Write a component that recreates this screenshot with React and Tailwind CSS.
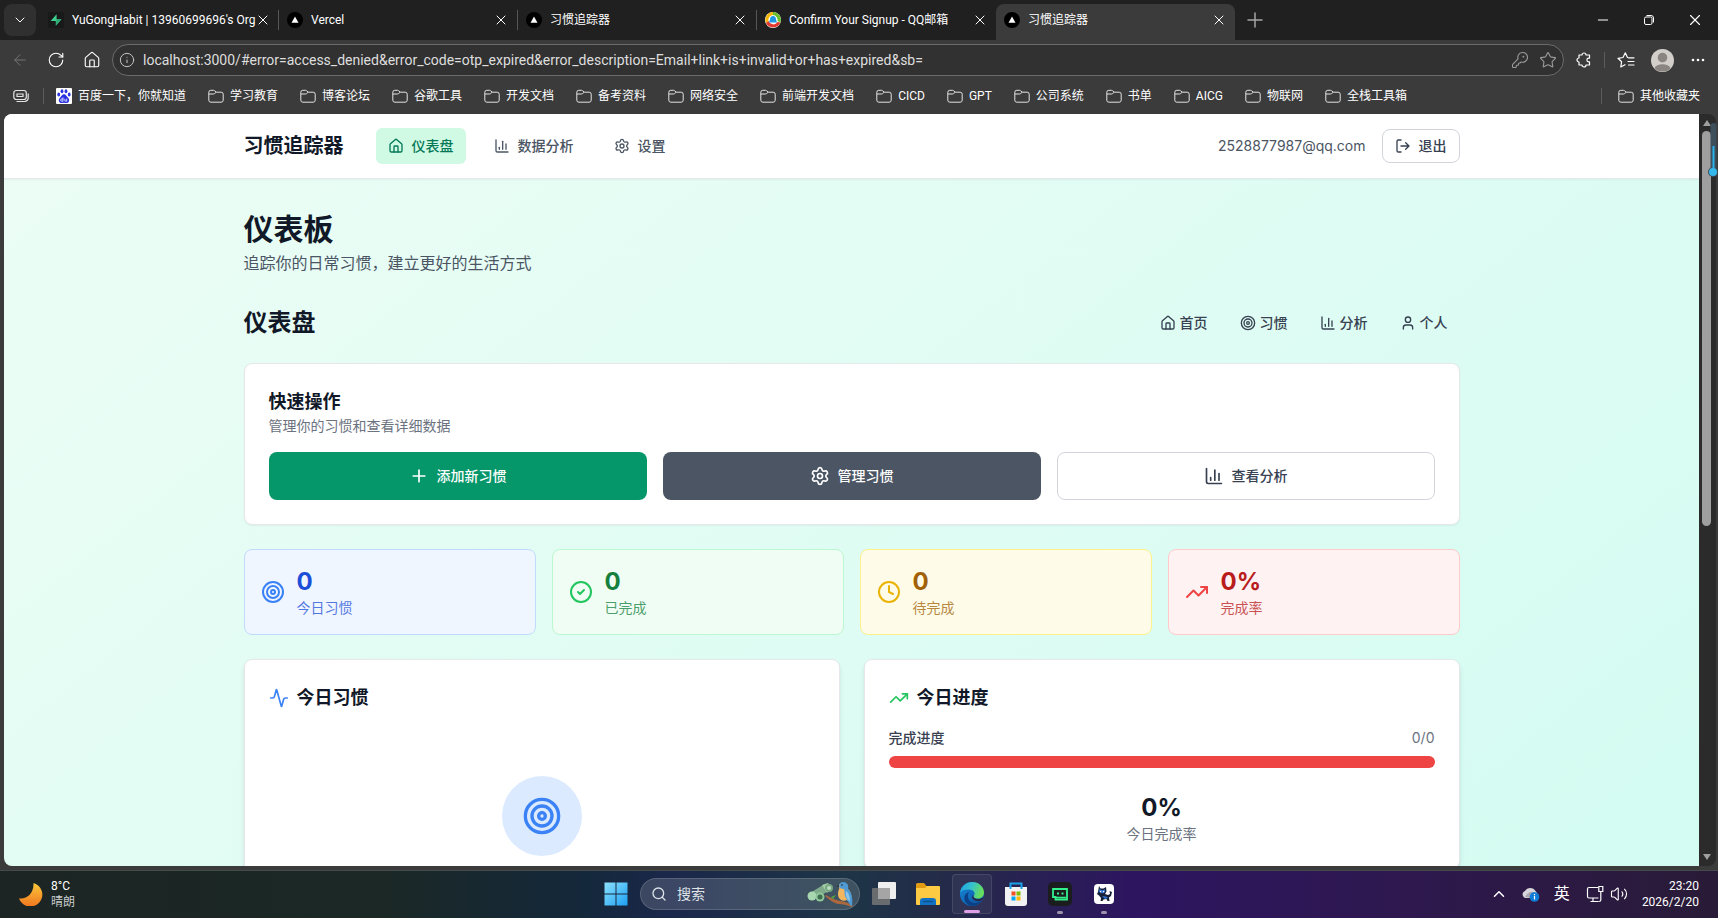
import {
    Activity, ArrowLeft, ChartColumn, ChevronDown, ChevronUp, CircleCheck, Clock, House, Info, KeyRound,
    Minus, Plus, RotateCw, Search, Settings, Star, Target, TrendingUp, User, Volume2, X,
} from 'lucide-react';

const tabs = [
    { id: 1, title: "YuGongHabit | 13960699696's Org", icon: 'supabase' },
    { id: 2, title: 'Vercel', icon: 'vercel' },
    { id: 3, title: '习惯追踪器', icon: 'vercel' },
    { id: 4, title: 'Confirm Your Signup - QQ邮箱', icon: 'qq' },
    { id: 5, title: '习惯追踪器', icon: 'vercel', active: true },
];

const bookmarks = [
    '学习教育', '博客论坛', '谷歌工具', '开发文档', '备考资料', '网络安全', '前端开发文档',
    'CICD', 'GPT', '公司系统', '书单', 'AICG', '物联网', '全栈工具箱',
];

const stats = [
    { label: '今日习惯', value: '0', Icon: Target, card: 'bg-[#eff6ff] border-[#bfdbfe] text-[#1d4ed8]', icon: 'text-[#3b82f6]' },
    { label: '已完成', value: '0', Icon: CircleCheck, card: 'bg-[#f0fdf4] border-[#bbf7d0] text-[#15803d]', icon: 'text-[#22c55e]' },
    { label: '待完成', value: '0', Icon: Clock, card: 'bg-[#fefce8] border-[#fef08a] text-[#a16207]', icon: 'text-[#eab308]' },
    { label: '完成率', value: '0%', Icon: TrendingUp, card: 'bg-[#fef2f2] border-[#fecaca] text-[#b91c1c]', icon: 'text-[#ef4444]' },
];

const quickNav = [
    { label: '首页', Icon: House },
    { label: '习惯', Icon: Target },
    { label: '分析', Icon: ChartColumn },
    { label: '个人', Icon: User },
];

function Favicon({ name }) {
    if (name === 'supabase') {
        return (
            <svg className="size-4 shrink-0" viewBox="0 0 16 16">
                <rect width="16" height="16" rx="2" fill="#191919" />
                <path d="M8.6 2.2v5h4.9L7.8 13.8V9H2.6z" fill="#3ecf8e" />
                <path d="M8.6 7.2h4.9L7.8 13.8z" fill="#2fa673" />
            </svg>
        );
    }
    if (name === 'qq') {
        return (
            <svg className="size-4 shrink-0" viewBox="0 0 16 16">
                <circle cx="8" cy="8" r="8" fill="#fff" />
                <path d="M1 11A8 8 0 0 1 8 0v3a5 5 0 0 0-4.500 6z" fill="#f7b500" />
                <path d="M8 0a8 8 0 0 1 7.500 10.500L12.500 9A5 5 0 0 0 8 3z" fill="#6abf2a" />
                <path d="M15.500 10.500A8 8 0 0 1 1 11l2.500-2A5 5 0 0 0 12.500 10z" fill="#e23a2e" />
                <path d="M8 4c2 0 3 1.500 3 3.500l1 3H4l1-3C5 5.500 6 4 8 4z" fill="#2196e3" />
            </svg>
        );
    }
    return (
        <svg className="size-4 shrink-0" viewBox="0 0 16 16">
            <circle cx="8" cy="8" r="8" fill="#000" />
            <path d="M8 4.500l3.500 6.200h-7z" fill="#fff" />
        </svg>
    );
}

function FolderIcon() {
    return (
        <svg className="size-4 shrink-0" viewBox="0 0 16 16" fill="none" stroke="#e4e4e4">
            <path d="M.8 4.300a2 2 0 0 1 2-2h2.600a2 2 0 0 1 1.400.600l1.400 1.300h5a2 2 0 0 1 2 2v6a2 2 0 0 1-2 2H2.800a2 2 0 0 1-2-2z" />
            <path d="M.8 6h4.600a2 2 0 0 0 1.300-.500l1.500-1.300" />
        </svg>
    );
}

function TabBar() {
    return (
        <div className="flex h-10 items-center bg-[#202020]">
            <button aria-label="标签操作" className="ml-1 flex size-8 shrink-0 items-center justify-center rounded-lg bg-[#303030]">
                <ChevronDown className="size-4" strokeWidth={1.5} />
            </button>
            <div className="ml-1 flex h-10 min-w-0 items-center">
                {tabs.map((tab) => (
                    <div
                        key={tab.id}
                        className={`flex w-[239px] items-center pr-2 pl-2 ${
                            tab.active ? 'h-9 self-end rounded-t-lg bg-[#3b3b3b] pb-1' : 'h-5'
                        } ${tab.id < 4 ? 'border-r border-[#565656]' : ''}`}
                    >
                        <Favicon name={tab.icon} />
                        <span className="ml-2 flex-1 text-xs leading-5 whitespace-nowrap">{tab.title}</span>
                        <button aria-label="关闭标签" className="shrink-0">
                            <X className="size-4" strokeWidth={1.5} />
                        </button>
                    </div>
                ))}
            </div>
            <button aria-label="新建标签" className="ml-2 flex size-6 items-center justify-center text-[#a5a5a5]">
                <Plus className="size-6" strokeWidth={1.5} />
            </button>
            <div className="ml-auto flex">
                <button aria-label="最小化" className="flex h-9 w-[46px] items-center justify-center">
                    <Minus className="size-4" strokeWidth={1.5} />
                </button>
                <button aria-label="还原" className="flex h-9 w-[46px] items-center justify-center">
                    <svg className="size-3" viewBox="0 0 12 12" fill="none" stroke="#fff">
                        <rect x="1.500" y="3" width="7.500" height="7.500" rx="1.500" />
                        <path d="M3.500 1.500H8A2.500 2.500 0 0 1 10.500 4v4.500" />
                    </svg>
                </button>
                <button aria-label="关闭" className="flex h-9 w-[46px] items-center justify-center">
                    <X className="size-[18px]" strokeWidth={1.5} />
                </button>
            </div>
        </div>
    );
}

function AddressBar() {
    return (
        <div className="flex h-10 items-center bg-[#3b3b3b] pr-3 pl-[11px]">
            <button aria-label="后退" className="text-[#777]"><ArrowLeft className="size-[18px]" strokeWidth={1.25} /></button>
            <button aria-label="刷新" className="ml-[18px]"><RotateCw className="size-[18px]" strokeWidth={1.5} /></button>
            <button aria-label="主页" className="ml-[18px]"><House className="size-[18px]" strokeWidth={1.5} /></button>
            <div className="ml-[11px] flex h-8 flex-1 items-center rounded-full border border-[#6b6b6b] bg-[#313131] pr-[6px] pl-[6px]">
                <Info className="size-4 shrink-0 text-[#c4c4c4]" strokeWidth={1.5} />
                <input
                    aria-label="地址栏"
                    className="ml-2 min-w-0 flex-1 bg-transparent text-sm text-[#dedede] outline-none"
                    defaultValue="localhost:3000/#error=access_denied&error_code=otp_expired&error_description=Email+link+is+invalid+or+has+expired&sb="
                />
                <button aria-label="密码" className="text-[#9a9a9a]"><KeyRound className="size-[18px]" strokeWidth={1.5} /></button>
                <button aria-label="收藏" className="ml-[10px] text-[#9a9a9a]"><Star className="size-[18px]" strokeWidth={1.5} /></button>
            </div>
            <button aria-label="扩展" className="ml-3">
                <svg className="size-4" viewBox="0 0 16 16" fill="none" stroke="currentColor" strokeWidth="1.200">
                    <path d="M3 3h3a2 2 0 0 1 4 0h3.500v3.200h-.8a1.800 1.800 0 0 0 0 3.600h.8V13H10a2 2 0 0 1-4 0H3V10a2 2 0 0 1 0-4z" strokeLinejoin="round" />
                </svg>
            </button>
            <span className="ml-3 h-4 w-px bg-[#5d5d5d]" />
            <button aria-label="收藏夹" className="ml-3">
                <svg className="size-[18px]" viewBox="0 0 18 18" fill="none" stroke="currentColor" strokeWidth="1.200" strokeLinecap="round" strokeLinejoin="round">
                    <path d="M10.500 6.500L8.300 1.800 6 6.500l-5 .8 3.600 3.500-.8 5.200L8 13.700M11.500 6.800h5.500M11 10.500h6M11.500 14h5.500" />
                </svg>
            </button>
            <button aria-label="个人资料" className="ml-4">
                <svg className="size-[23px]" viewBox="0 0 24 24">
                    <circle cx="12" cy="12" r="12" fill="#d2cfcb" />
                    <circle cx="12" cy="9" r="5" fill="#8b8581" />
                    <path d="M3.500 20a9 6 0 0 1 17 0 12 12 0 0 1-17 0z" fill="#8b8581" />
                </svg>
            </button>
            <button aria-label="更多" className="ml-4">
                <svg className="h-4 w-4" viewBox="0 0 16 16" fill="currentColor">
                    <circle cx="3" cy="8" r="1.300" /><circle cx="8" cy="8" r="1.300" /><circle cx="13" cy="8" r="1.300" />
                </svg>
            </button>
        </div>
    );
}

function BookmarkBar() {
    return (
        <div className="flex h-[34px] items-center bg-[#3b3b3b] pr-[18px] pb-[2px] pl-[13px] text-xs whitespace-nowrap">
            <svg className="size-4 shrink-0" viewBox="0 0 16 16" fill="none" stroke="#e4e4e4" strokeWidth="1.200">
                <rect x=".8" y="2.500" width="12.500" height="9" rx="2.500" />
                <path d="M4 6h6v2.500H4zM3.500 13.500h8a3.500 3.500 0 0 0 3.700-3.500V5.500" />
            </svg>
            <span className="ml-[14px] h-4 w-px bg-[#5d5d5d]" />
            <a href="#baidu" className="ml-3 flex items-center gap-[6px]">
                <svg className="size-4 shrink-0" viewBox="0 0 16 16">
                    <rect width="16" height="16" rx="1" fill="#fff" />
                    <g fill="#2932e1">
                        <ellipse cx="6" cy="3.300" rx="1.400" ry="2" /><ellipse cx="10" cy="3.300" rx="1.400" ry="2" />
                        <ellipse cx="2.700" cy="6.500" rx="1.400" ry="1.900" /><ellipse cx="13.200" cy="6.500" rx="1.400" ry="1.900" />
                        <path d="M8 6.200c2 0 2.500 2 4 3.500 2.200 2.200 1 5.300-1.500 5.300-1 0-1.500-.3-2.500-.3s-1.500.3-2.500.3C3 15 1.800 11.900 4 9.700 5.500 8.200 6 6.200 8 6.200z" />
                    </g>
                    <path d="M7 9.500v3.700H5.800a1 1 0 0 1 0-2.300H7M8.800 10.800v1.700q0 .7.700.7h1.200v-2.500" fill="none" stroke="#fff" strokeWidth=".8" />
                </svg>
                百度一下，你就知道
            </a>
            {bookmarks.map((name) => (
                <a key={name} href={`#${name}`} className="ml-[22px] flex items-center gap-[6px]">
                    <FolderIcon />
                    {name}
                </a>
            ))}
            <span className="ml-auto h-4 w-px bg-[#5d5d5d]" />
            <a href="#other" className="ml-4 flex items-center gap-[6px]">
                <FolderIcon />
                其他收藏夹
            </a>
        </div>
    );
}

function Header() {
    return (
        <header className="relative border-b border-[#e5e7eb] bg-white shadow-xs">
            <div className="mx-auto flex h-16 max-w-7xl items-center px-8">
                <span className="text-xl font-bold text-[#111827]">习惯追踪器</span>
                <nav className="ml-8 flex gap-4 text-sm font-medium text-[#4b5563]">
                    <a href="#dashboard" className="flex items-center gap-2 rounded-md bg-[#d1fae5] px-3 py-2 text-[#047857]">
                        <House className="size-4" /> 仪表盘
                    </a>
                    <a href="#analytics" className="flex items-center gap-2 rounded-md px-3 py-2">
                        <ChartColumn className="size-4" /> 数据分析
                    </a>
                    <a href="#settings" className="flex items-center gap-2 rounded-md px-3 py-2">
                        <Settings className="size-4" /> 设置
                    </a>
                </nav>
                <span className="ml-auto text-sm text-[#4b5563]">2528877987@qq.com</span>
                <button className="ml-4 flex items-center gap-2 rounded-lg border border-[#d1d5db] px-3 py-[6px] text-sm font-medium text-[#374151]">
                    <svg className="size-4" viewBox="0 0 24 24" fill="none" stroke="currentColor" strokeWidth="2" strokeLinecap="round" strokeLinejoin="round">
                        <path d="M9 21H5a2 2 0 0 1-2-2V5a2 2 0 0 1 2-2h4M16 17l5-5-5-5M21 12H9" />
                    </svg>
                    退出
                </button>
            </div>
        </header>
    );
}

function Dashboard() {
    return (
        <main className="mx-auto max-w-7xl px-8 py-8">
            <h1 className="text-3xl font-bold text-[#111827]">仪表板</h1>
            <p className="mt-1 text-base text-[#4b5563]">追踪你的日常习惯，建立更好的生活方式</p>

            <div className="mt-8 flex h-8 items-center justify-between">
                <h2 className="text-2xl font-bold text-[#111827]">仪表盘</h2>
                <nav className="flex gap-2 text-sm font-medium text-[#374151]">
                    {quickNav.map(({ label, Icon }) => (
                        <a key={label} href={`#${label}`} className="flex items-center gap-1 px-3 py-1">
                            <Icon className="size-4" /> {label}
                        </a>
                    ))}
                </nav>
            </div>

            <section className="mt-6 rounded-lg border border-[#e5e7eb] bg-white p-6 shadow-xs">
                <h3 className="text-lg font-semibold text-[#111827]">快速操作</h3>
                <p className="text-sm text-[#6b7280]">管理你的习惯和查看详细数据</p>
                <div className="mt-4 grid grid-cols-3 gap-4 text-sm font-medium">
                    <button className="flex h-12 items-center justify-center gap-2 rounded-lg bg-[#059669] text-white">
                        <Plus className="size-5" /> 添加新习惯
                    </button>
                    <button className="flex h-12 items-center justify-center gap-2 rounded-lg bg-[#4b5563] text-white">
                        <Settings className="size-5" /> 管理习惯
                    </button>
                    <button className="flex h-12 items-center justify-center gap-2 rounded-lg border border-[#d1d5db] text-[#374151]">
                        <ChartColumn className="size-5" /> 查看分析
                    </button>
                </div>
            </section>

            <div className="mt-6 grid grid-cols-4 gap-4">
                {stats.map(({ label, value, Icon, card, icon }) => (
                    <div key={label} className={`flex items-center gap-3 rounded-lg border p-4 ${card}`}>
                        <Icon className={`size-6 ${icon}`} />
                        <div>
                            <div className="text-2xl font-bold">{value}</div>
                            <div className="text-sm opacity-75">{label}</div>
                        </div>
                    </div>
                ))}
            </div>

            <div className="mt-6 grid grid-cols-2 items-start gap-6">
                <section className="rounded-lg border border-[#e5e7eb] bg-white p-6 shadow-md">
                    <h3 className="flex items-center gap-2 text-lg font-semibold text-[#111827]">
                        <Activity className="size-5 text-[#3b82f6]" /> 今日习惯
                    </h3>
                    <div className="flex justify-center py-16">
                        <div className="flex size-20 items-center justify-center rounded-full bg-[#dbeafe]">
                            <Target className="size-10 text-[#3b82f6]" />
                        </div>
                    </div>
                </section>
                <section className="rounded-lg border border-[#e5e7eb] bg-white p-6 shadow-md">
                    <h3 className="flex items-center gap-2 text-lg font-semibold text-[#111827]">
                        <TrendingUp className="size-5 text-[#22c55e]" /> 今日进度
                    </h3>
                    <div className="mt-4 flex justify-between text-sm">
                        <span className="font-medium text-[#374151]">完成进度</span>
                        <span className="text-[#6b7280]">0/0</span>
                    </div>
                    <div className="mt-2 h-3 rounded-full bg-[#ef4444]" />
                    <div className="mt-6 text-center">
                        <div className="text-2xl font-bold text-[#111827]">0%</div>
                        <div className="text-sm text-[#6b7280]">今日完成率</div>
                    </div>
                </section>
            </div>
        </main>
    );
}

function Scrollbar() {
    return (
        <div className="flex w-[17px] shrink-0 flex-col items-center bg-[#2b2b2b] pr-[2px]">
            <svg className="h-[17px] w-[10px]" viewBox="0 0 10 17"><path d="M5 6l4 6H1z" fill="#9f9f9f" /></svg>
            <div className="flex w-[9px] flex-1 flex-col">
                <div className="h-[55%] rounded-full bg-[#9f9f9f]" />
            </div>
            <svg className="h-[17px] w-[10px]" viewBox="0 0 10 17"><path d="M5 11l4-6H1z" fill="#9f9f9f" /></svg>
        </div>
    );
}

function EdgeGauge() {
    return (
        <svg className="absolute top-2 right-0 h-14 w-[10px]" viewBox="0 0 10 56">
            <rect x="2.500" y="1" width="6" height="48" rx="3" fill="#3c4f5b" />
            <circle cx="5" cy="50" r="5" fill="#3c4f5b" />
            <path d="M5.500 24v24" stroke="#29b1ea" strokeWidth="2" />
            <circle cx="5" cy="50" r="4" fill="#35b8ec" />
        </svg>
    );
}

function SearchArt() {
    return (
        <svg className="h-7 w-12 shrink-0" viewBox="0 0 48 28">
            <path d="M3 13l13-8 5 6-12 8z" fill="#7fa98a" />
            <path d="M15 5l6-2 4 5-5 5z" fill="#a4cfa6" />
            <circle cx="5" cy="16" r="4.500" fill="#a9d8b0" />
            <circle cx="13" cy="17" r="4.500" fill="#8fc79a" />
            <circle cx="13" cy="17" r="2.500" fill="#3f6b50" />
            <circle cx="22" cy="8" r="4" fill="#77a783" />
            <circle cx="22" cy="8" r="2" fill="#b9dcbc" />
            <path d="M19 15q8 5 15 6t12 5l-1 1q-8-3-13-3T18 16z" fill="#a9683e" />
            <path d="M24 17l5-2-3 4z" fill="#4fa83c" />
            <path d="M36 3c4 0 5 3 5 6 4 4 4 10 3 15-2-1-3-3-4-4-5 2-9-1-9-6 0-4 2-5 1-7s1-4 4-4z" fill="#f3b65f" />
            <path d="M36 2c4 0 6 3 5 7 4 4 5 10 4 17-3-1-4-5-6-8-2-3-1-7-2-9-3 0-5-1-5-3s2-4 4-4z" fill="#4f9ad3" />
            <path d="M39 11c3 2 4 6 4 10-3-1-5-5-4-10z" fill="#8cc5ea" />
            <path d="M32 5l-3 1 3 1z" fill="#333" />
            <circle cx="35" cy="5" r=".8" fill="#222" />
        </svg>
    );
}

function Taskbar() {
    return (
        <footer className="grid h-12 shrink-0 grid-cols-[1fr_auto_1fr] items-center border-t border-[#454b4b] bg-[linear-gradient(to_right,#1c2523_0%,#1b2825_22%,#14283b_34%,#1b274a_39%,#1d3546_49%,#25294a_56%,#2d1560_66%,#2e184e_82%,#291b37_100%)] pb-[2px] pl-[2px]">
            <div className="flex items-center pl-[17px]">
                <svg className="size-6" viewBox="0 0 24 24">
                    <defs>
                        <linearGradient id="moon" x1="0" y1="0" x2="0" y2="1">
                            <stop offset="0" stopColor="#fbc93b" /><stop offset="1" stopColor="#f0761f" />
                        </linearGradient>
                    </defs>
                    <path d="M14.500 1a12 12 0 1 1-14.500 15.500c8 1 15-5 14.500-15.500z" fill="url(#moon)" />
                </svg>
                <div className="ml-2 text-xs leading-4">
                    <div>8°C</div>
                    <div className="text-[#c9cccb]">晴朗</div>
                </div>
            </div>

            <div className="flex items-center gap-1">
                <button aria-label="开始" className="flex size-10 items-center justify-center">
                    <svg className="size-6" viewBox="0 0 24 24">
                        <defs>
                            <linearGradient id="win" gradientUnits="userSpaceOnUse" x1="0" y1="0" x2="24" y2="24">
                                <stop offset="0" stopColor="#8fe2fc" /><stop offset="1" stopColor="#1a9ff2" />
                            </linearGradient>
                        </defs>
                        <path d="M.5.500h11v11H.5zM12.500.500h11v11h-11zM.5 12.500h11v11H.5zM12.500 12.500h11v11h-11z" fill="url(#win)" />
                    </svg>
                </button>
                <label className="flex h-8 w-[220px] items-center rounded-full border border-white/15 bg-white/15 pr-1 pl-[10px]">
                    <Search className="size-4 shrink-0 text-[#dde3e8]" />
                    <input
                        aria-label="搜索"
                        placeholder="搜索"
                        className="ml-[10px] min-w-0 flex-1 bg-transparent text-sm outline-none placeholder:text-[#dfe3e8]"
                    />
                    <SearchArt />
                </label>
                <button aria-label="任务视图" className="flex size-10 items-center justify-center">
                    <svg className="size-6" viewBox="0 0 24 24">
                        <rect x="6" width="18" height="17" rx="1" fill="#efefef" />
                        <rect y="6" width="18" height="17" rx="1" fill="#777" fillOpacity=".85" />
                        <path d="M6 6h12v11H6z" fill="#a5a5a5" />
                    </svg>
                </button>
                <button aria-label="文件资源管理器" className="flex size-10 items-center justify-center">
                    <svg className="size-6" viewBox="0 0 24 24">
                        <path d="M0 2.500A1.500 1.500 0 0 1 1.500 1H8l2.500 3H22v6H0z" fill="#e09b12" />
                        <path d="M0 6h9l2-2h12a1 1 0 0 1 1 1v17a1 1 0 0 1-1 1H1a1 1 0 0 1-1-1z" fill="#fccb43" />
                        <path d="M4 23v-4a3 3 0 0 1 3-3h10a3 3 0 0 1 3 3v4z" fill="#1272c4" />
                        <path d="M7 19.500h10" stroke="#0b5394" strokeWidth="1.500" />
                    </svg>
                </button>
                <button aria-label="Edge" className="relative flex size-10 items-center justify-center rounded-sm border border-white/10 bg-white/5">
                    <svg className="size-6" viewBox="0 0 24 24">
                        <defs>
                            <linearGradient id="edgeTop" x1="0" y1="0" x2="1" y2="0.300">
                                <stop offset="0" stopColor="#1b9de2" /><stop offset="0.500" stopColor="#35c1d0" /><stop offset="1" stopColor="#66dd5c" />
                            </linearGradient>
                            <linearGradient id="edgeLow" x1="0" y1="0" x2="1" y2="1">
                                <stop offset="0" stopColor="#1689d8" /><stop offset="1" stopColor="#0c4f9e" />
                            </linearGradient>
                        </defs>
                        <circle cx="12" cy="12" r="12" fill="url(#edgeLow)" />
                        <path d="M0 11C1 4 6 0 12 0c7 0 12 5 12 10.500 0 4-3 6-6 6-3.500 0-5-1.500-4-3 2-3-1-6-5-6-4.500 0-8 1-9 3.500z" fill="url(#edgeTop)" />
                        <path d="M9 10c-3 5 0 11 6 11 3 0 5-1 7-3-4 7-14 8-17 1-2-5 1-8 4-9z" fill="#0b3f86" />
                        <path d="M13.500 13c-1 2 1 4 4.500 4 2 0 4-.5 5.500-2-.5 1.500-1 2.500-2 3.500-5 2-11-1-9-5z" fill="#28294a" />
                    </svg>
                    <span className="absolute bottom-0 h-[3px] w-4 rounded-full bg-[#dd9fe6]" />
                </button>
                <button aria-label="Microsoft Store" className="flex size-10 items-center justify-center">
                    <svg className="size-6" viewBox="0 0 24 24">
                        <path d="M6.500 7V1.500h11V7" fill="none" stroke="#1ba1e8" strokeWidth="2" />
                        <path d="M1 5h22v16a3 3 0 0 1-3 3H4a3 3 0 0 1-3-3z" fill="#f2f2f4" />
                        <path d="M6.500 5v2M17.500 5v2" stroke="#1ba1e8" strokeWidth="2" />
                        <path d="M7.500 9.500h4v4h-4z" fill="#f25022" />
                        <path d="M12.500 9.500h4v4h-4z" fill="#7fba00" />
                        <path d="M7.500 14.500h4v4h-4z" fill="#00a4ef" />
                        <path d="M12.500 14.500h4v4h-4z" fill="#ffb900" />
                    </svg>
                </button>
                <button aria-label="Trae" className="relative flex size-10 items-center justify-center">
                    <svg className="size-6" viewBox="0 0 24 24">
                        <rect width="24" height="24" rx="5" fill="#1b1c1d" />
                        <path d="M5 7h14v10.500H7.500V15H5z" fill="none" stroke="#32f08c" strokeWidth="1.800" />
                        <path d="M7.500 15.500H18" stroke="#32f08c" strokeWidth="1.500" />
                        <path d="M9 10.500h2v2H9zM13.500 10.500h2v2h-2z" fill="#32f08c" />
                    </svg>
                    <span className="absolute bottom-0 h-[3px] w-[6px] rounded-full bg-[#9c94ad]" />
                </button>
                <button aria-label="助手" className="relative flex size-10 items-center justify-center">
                    <svg className="size-5" viewBox="0 0 20 20">
                        <rect width="20" height="20" rx="4" fill="#fff" />
                        <path d="M5 2l1.500 2.500h3L12 3l.5 4.500L11 10l3 1 2-1-.5-3 2.500 1-1 4-2 1.500.5 3.500h-2l-1-2-3 .5-1 1.500h-2l.5-3L5 11.500 3 10l1-2z" fill="#172238" />
                        <path d="M5.500 4.500L7 6h2.500L11 5v3l-2.500 1.500L5 8zM8 12l4 .5 2 1.500-3 1z" fill="#2f6fd0" />
                        <path d="M6 7h1.200v1.200H6zM9 7h1.200v1.200H9z" fill="#fff" />
                    </svg>
                    <span className="absolute bottom-0 h-[3px] w-[6px] rounded-full bg-[#9c94ad]" />
                </button>
            </div>

            <div className="flex items-center justify-end pr-[19px]">
                <button aria-label="显示隐藏的图标"><ChevronUp className="size-[18px]" /></button>
                <svg className="ml-[14px] h-4 w-[18px]" viewBox="0 0 18 16">
                    <path d="M1 10a3.500 3.500 0 0 1 2-5 6 6 0 0 1 10.500 0A4 4 0 0 1 12 12H4a3 3 0 0 1-3-2z" fill="#d8d5dc" />
                    <path d="M3 11q3-6 9-5l2 1-5 5z" fill="#aaa6b2" />
                    <circle cx="12.500" cy="11" r="4.800" fill="#0f7bd6" />
                    <path d="M12.500 10v3.500M12.500 8v1.200" stroke="#fff" strokeWidth="1.200" />
                </svg>
                <span className="ml-[14px] text-base leading-5">英</span>
                <svg className="ml-4 size-[18px]" viewBox="0 0 18 18" fill="none" stroke="#fff" strokeWidth="1.200">
                    <path d="M12 2.500H3A1.500 1.500 0 0 0 1.500 4v7.500A1.500 1.500 0 0 0 3 13h9.500M7 13v3.500M4.500 16.500h8M12.800 1.500h4v5h-4zM14.800 6.500v8.500q0 1.500-2 1.500" />
                </svg>
                <Volume2 className="ml-[6px] size-[18px]" strokeWidth={1.5} />
                <div className="ml-[14px] text-right text-xs leading-4">
                    <div>23:20</div>
                    <div>2026/2/20</div>
                </div>
            </div>
        </footer>
    );
}

export default function App() {
    return (
        <div className="flex h-screen flex-col overflow-hidden bg-[#3b3b3b] font-['Roboto','Noto_Sans_CJK_SC',sans-serif] text-white">
            <TabBar />
            <AddressBar />
            <BookmarkBar />
            <div className="relative flex min-h-0 flex-1 pr-[2px] pb-1 pl-1">
                <div className="flex min-w-0 flex-1 overflow-hidden rounded-lg">
                    <div className="min-w-0 flex-1 overflow-hidden font-['Inter','Noto_Sans_CJK_SC',sans-serif]">
                        <div className="min-h-[1374px] bg-linear-to-br from-[#ecfdf5] to-[#ccfbf1]">
                            <Header />
                            <Dashboard />
                        </div>
                    </div>
                    <Scrollbar />
                </div>
                <EdgeGauge />
            </div>
            <Taskbar />
        </div>
    );
}
